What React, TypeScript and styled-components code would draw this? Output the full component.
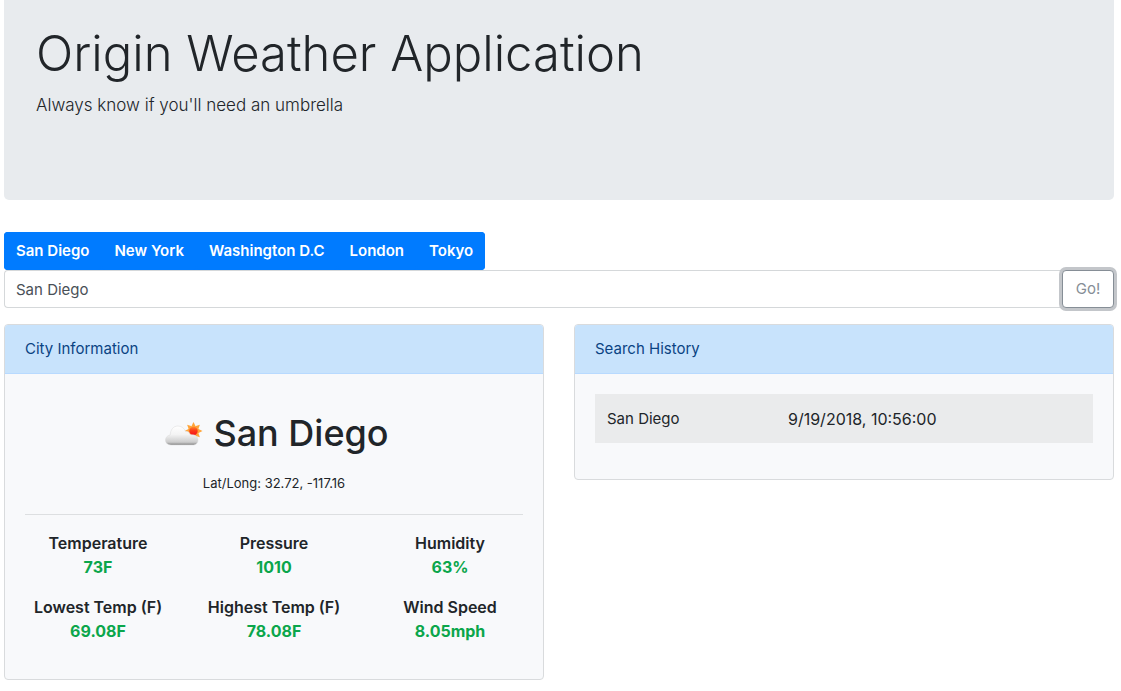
import React, { useState } from "react";
import styled, { createGlobalStyle } from "styled-components";

const GlobalStyle = createGlobalStyle`
  *, *::before, *::after { box-sizing: border-box; }
  body {
    margin: 0;
    background: #fff;
    color: #212529;
    font-family: Inter, "Liberation Sans", sans-serif;
    font-size: 15px;
    font-weight: 400;
    line-height: 24px;
  }
  h1, h2, p, dl, dd { margin: 0; }
  button, input { font: inherit; }
`;

const Page = styled.div`
  padding: 0 7px 12px 4px;
`;

const Jumbotron = styled.header`
  padding: 20px 32px 80px;
  margin-bottom: 32px;
  border-radius: 0 0 5px 5px;
  background: #e8ebee;
`;

const Title = styled.h1`
  font-size: 49px;
  font-weight: 300;
  line-height: 68px;
`;

const Lead = styled.p`
  margin-top: 2px;
  font-size: 17px;
  font-weight: 300;
  line-height: 30px;
`;

const CityGroup = styled.nav`
  display: inline-flex;
  gap: 1px;
  border-radius: 4px;
  background: #007bff;
  vertical-align: top;
`;

const CityButton = styled.button`
  height: 38px;
  padding: 0 12px;
  border: 0;
  border-radius: 4px;
  background: #007bff;
  color: #fff;
  font-weight: 600;
  cursor: pointer;
`;

const SearchForm = styled.form`
  display: flex;
  margin-bottom: 16px;
`;

const SearchInput = styled.input`
  flex: 1;
  min-width: 0;
  height: 38px;
  padding: 0 11px;
  border: 1px solid #d5d8da;
  border-right: 0;
  border-radius: 4px 0 0 4px;
  background: #fff;
  color: #495057;
  outline: none;
`;

const GoButton = styled.button`
  min-width: 52px;
  height: 38px;
  padding: 0 12px;
  border: 1px solid #868e96;
  border-radius: 4px;
  background: #fff;
  color: #868e96;
  box-shadow: 0 0 0 3px #c3c6ca;
  cursor: pointer;
`;

const Columns = styled.main`
  display: grid;
  grid-template-columns: 1fr 1fr;
  align-items: start;
  gap: 30px;
`;

const Card = styled.section`
  border: 1px solid #d9dbdd;
  border-radius: 4px;
  background: #f8f9fb;
  overflow: hidden;
`;

const CardHeader = styled.h2`
  padding: 12px 20px;
  border-bottom: 1px solid #b8daff;
  background: #c8e3fc;
  color: #0b4383;
  font-size: 15px;
  font-weight: 400;
  line-height: 24px;
`;

const CardBody = styled.div`
  padding: 20px;
`;

const CityHeading = styled.div`
  display: flex;
  align-items: center;
  justify-content: center;
  gap: 4px;
  padding: 15px 0 14px;
`;

const CityName = styled.h2`
  font-size: 36px;
  font-weight: 500;
  line-height: 48px;
`;

const Coordinates = styled.p`
  padding-bottom: 19px;
  border-bottom: 1px solid #dddfe1;
  font-size: 13px;
  text-align: center;
`;

const Stats = styled.dl`
  display: grid;
  grid-template-columns: repeat(3, 1fr);
  row-gap: 16px;
  margin: 16px -15px;
  font-size: 16px;
  text-align: center;
`;

const StatLabel = styled.dt`
  font-weight: 600;
`;

const StatValue = styled.dd`
  color: #0ba64b;
  font-weight: 700;
`;

const HistoryTable = styled.table`
  width: 100%;
  margin-bottom: 16px;
  border-collapse: collapse;
`;

const HistoryRow = styled.tr`
  border-top: 1px solid #eaebec;
  background: #eaebec;
`;

const CityCell = styled.td`
  width: 181px;
  padding: 12px;
`;

const TimeCell = styled.td`
  padding: 12px;
  font-size: 16px;
`;

const CloudSun = () => (
  <svg width="50" height="48" viewBox="0 0 50 48" aria-hidden="true">
    <defs>
      <linearGradient id="cloud" x1="0" y1="0" x2="0" y2="1">
        <stop offset="0" stopColor="#ffffff" />
        <stop offset="0.45" stopColor="#f3f3f3" />
        <stop offset="0.85" stopColor="#cccccc" />
        <stop offset="1" stopColor="#858585" />
      </linearGradient>
      <linearGradient id="sun" x1="0" y1="0" x2="0" y2="1">
        <stop offset="0" stopColor="#ff8a2e" />
        <stop offset="0.45" stopColor="#fb3a18" />
        <stop offset="1" stopColor="#f50f1b" />
      </linearGradient>
    </defs>
    <g transform="translate(34.5 22)" fill="#ffa53a">
      {[0, 45, 90, 135, 180, 225, 270, 315].map((angle) => (
        <path key={angle} d="M-2.2 -4.5L0 -9L2.2 -4.5Z" transform={`rotate(${angle})`} />
      ))}
      <circle r="5.3" />
      <circle r="4.2" fill="url(#sun)" />
    </g>
    <path
      d="M12 36C8.500 36 6.500 34 6.500 31.100C6.500 28.400 8.500 26.400 11.200 26C11.500 20.700 14.300 17 19 17C22.500 17 25.300 19.200 26.500 22.500C28.400 22 30.200 23 30.900 25.200C32.700 26.300 35 25.300 36.500 26.500C37.900 27.500 39 29.200 39 31.100C39 34 37 36 34.500 36Z"
      fill="url(#cloud)"
      stroke="#d9d9d9"
      strokeWidth="0.5"
    />
  </svg>
);

const cities = ["San Diego", "New York", "Washington D.C", "London", "Tokyo"];

const stats = [
  { label: "Temperature", value: "73F" },
  { label: "Pressure", value: "1010" },
  { label: "Humidity", value: "63%" },
  { label: "Lowest Temp (F)", value: "69.08F" },
  { label: "Highest Temp (F)", value: "78.08F" },
  { label: "Wind Speed", value: "8.05mph" },
];

const history = [{ city: "San Diego", time: "9/19/2018, 10:56:00" }];

export default function App() {
  const [query, setQuery] = useState("San Diego");

  return (
    <>
      <GlobalStyle />
      <Page>
        <Jumbotron>
          <Title>Origin Weather Application</Title>
          <Lead>Always know if you'll need an umbrella</Lead>
        </Jumbotron>
        <CityGroup aria-label="Cities">
          {cities.map((city) => (
            <CityButton key={city} type="button" onClick={() => setQuery(city)}>
              {city}
            </CityButton>
          ))}
        </CityGroup>
        <SearchForm onSubmit={(event) => event.preventDefault()}>
          <SearchInput
            aria-label="City"
            value={query}
            onChange={(event) => setQuery(event.target.value)}
          />
          <GoButton type="submit">Go!</GoButton>
        </SearchForm>
        <Columns>
          <Card>
            <CardHeader>City Information</CardHeader>
            <CardBody>
              <CityHeading>
                <CloudSun />
                <CityName>San Diego</CityName>
              </CityHeading>
              <Coordinates>Lat/Long: 32.72, -117.16</Coordinates>
              <Stats>
                {stats.map(({ label, value }) => (
                  <div key={label}>
                    <StatLabel>{label}</StatLabel>
                    <StatValue>{value}</StatValue>
                  </div>
                ))}
              </Stats>
            </CardBody>
          </Card>
          <Card>
            <CardHeader>Search History</CardHeader>
            <CardBody>
              <HistoryTable>
                <tbody>
                  {history.map(({ city, time }) => (
                    <HistoryRow key={time}>
                      <CityCell>{city}</CityCell>
                      <TimeCell>{time}</TimeCell>
                    </HistoryRow>
                  ))}
                </tbody>
              </HistoryTable>
            </CardBody>
          </Card>
        </Columns>
      </Page>
    </>
  );
}
